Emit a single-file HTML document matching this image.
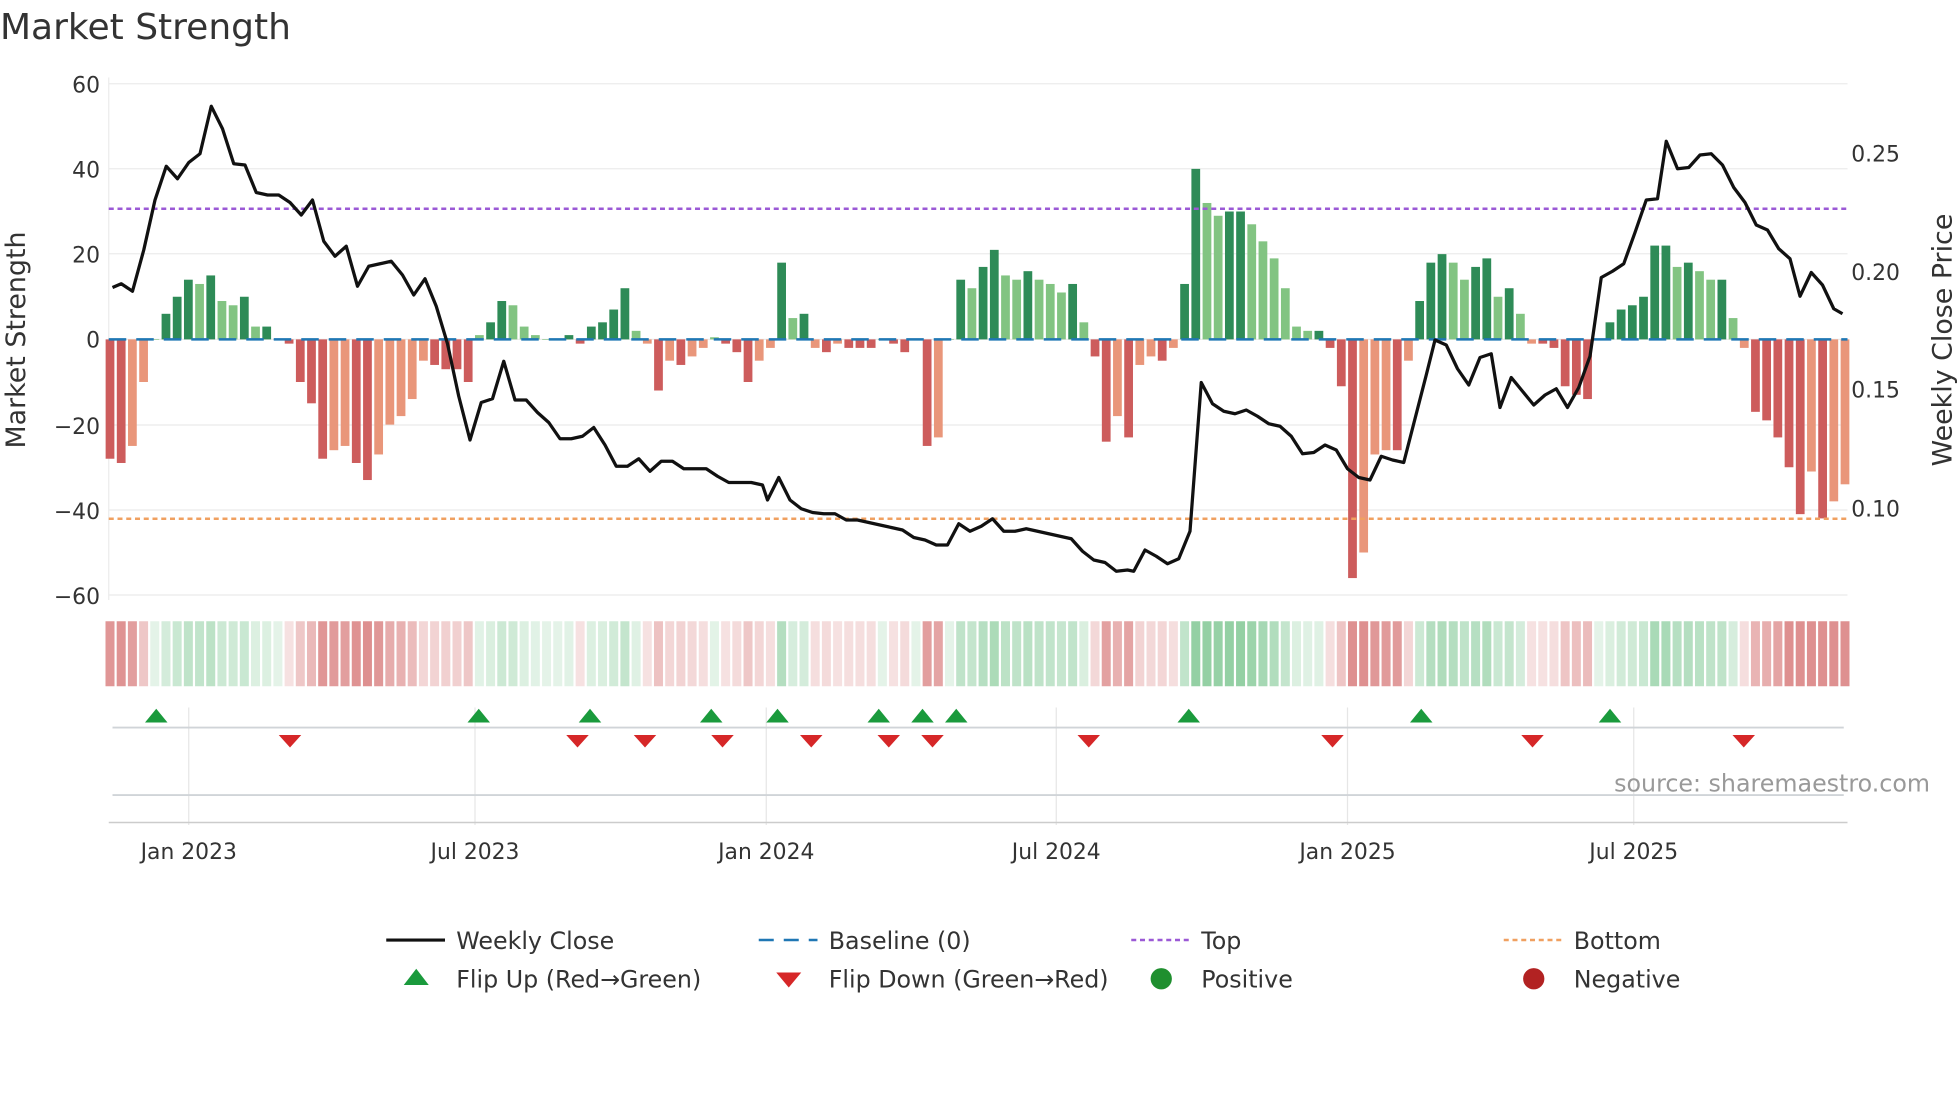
<!DOCTYPE html>
<html><head><meta charset="utf-8"><style>
html,body{margin:0;padding:0;background:#fff;}
svg{display:block;font-family:"DejaVu Sans","Liberation Sans",sans-serif;}
</style></head><body>
<svg id="s" width="1960" height="1102" viewBox="0 0 1568 881.6" xmlns="http://www.w3.org/2000/svg">
<text x="0" y="31" font-size="28.8" fill="#333">Market Strength</text>
<g id="grid" stroke="#ebebeb" stroke-width="1">
<line x1="87" x2="1478" y1="67" y2="67"/><line x1="87" x2="1478" y1="135" y2="135"/>
<line x1="87" x2="1478" y1="203" y2="203"/><line x1="87" x2="1478" y1="271.5" y2="271.5"/>
<line x1="87" x2="1478" y1="340" y2="340"/><line x1="87" x2="1478" y1="408" y2="408"/>
<line x1="87" x2="1478" y1="476" y2="476"/>
<line x1="87" x2="87" y1="62" y2="480"/>
</g>
<g font-size="17.5" fill="#333" text-anchor="end">
<text x="80" y="74">60</text><text x="80" y="142">40</text><text x="80" y="210">20</text>
<text x="80" y="278">0</text><text x="80" y="347">−20</text><text x="80" y="415">−40</text><text x="80" y="483">−60</text>
</g>
<g font-size="17.5" fill="#333">
<text x="1481" y="129">0.25</text><text x="1481" y="224">0.20</text><text x="1481" y="318">0.15</text><text x="1481" y="413">0.10</text>
</g>
<text transform="translate(20,272) rotate(-90)" font-size="21.5" fill="#333" text-anchor="middle">Market Strength</text>
<text transform="translate(1561,272) rotate(-90)" font-size="21.5" fill="#333" text-anchor="middle">Weekly Close Price</text>
<g id="bars"></g>
<line x1="87" x2="1478" y1="271.5" y2="271.5" stroke="#1f77b4" stroke-width="2" stroke-dasharray="14,8"/>
<line x1="87" x2="1478" y1="167" y2="167" stroke="#9b59d6" stroke-width="2" stroke-dasharray="4,3"/>
<line x1="87" x2="1478" y1="415" y2="415" stroke="#f0a060" stroke-width="2" stroke-dasharray="4,3"/>
<polyline id="price" fill="none" stroke="#111" stroke-width="2.6" stroke-linejoin="round"/>
<g id="heat"></g>
<g stroke="#e6e6e6" stroke-width="1">
<line x1="151" x2="151" y1="566" y2="660"/><line x1="380" x2="380" y1="566" y2="660"/><line x1="613" x2="613" y1="566" y2="660"/>
<line x1="845" x2="845" y1="566" y2="660"/><line x1="1078" x2="1078" y1="566" y2="660"/><line x1="1307" x2="1307" y1="566" y2="660"/>
</g>
<line x1="90" x2="1475" y1="582" y2="582" stroke="#d0d4d8" stroke-width="1.5"/>
<line x1="90" x2="1475" y1="636" y2="636" stroke="#d0d4d8" stroke-width="1.5"/>
<line x1="87" x2="1478" y1="658" y2="658" stroke="#ccc" stroke-width="1.2"/>
<g id="mk"></g>
<text x="1544" y="633" font-size="19" fill="#999" text-anchor="end">source: sharemaestro.com</text>
<g font-size="17.5" fill="#333" text-anchor="middle">
<text x="151" y="687">Jan 2023</text><text x="380" y="687">Jul 2023</text><text x="613" y="687">Jan 2024</text>
<text x="845" y="687">Jul 2024</text><text x="1078" y="687">Jan 2025</text><text x="1307" y="687">Jul 2025</text>
</g>
<g font-size="19" fill="#333">
<line x1="309" x2="356" y1="752" y2="752" stroke="#111" stroke-width="2.5"/><text x="365" y="759">Weekly Close</text>
<line x1="607" x2="654" y1="752" y2="752" stroke="#1f77b4" stroke-width="2" stroke-dasharray="12,8"/><text x="663" y="759">Baseline (0)</text>
<line x1="905" x2="952" y1="752" y2="752" stroke="#9b59d6" stroke-width="2" stroke-dasharray="4,3"/><text x="961" y="759">Top</text>
<line x1="1203" x2="1250" y1="752" y2="752" stroke="#f0a060" stroke-width="2" stroke-dasharray="4,3"/><text x="1259" y="759">Bottom</text>
<polygon points="323,788 333,775 343,788" fill="#1a9a3c"/><text x="365" y="790">Flip Up (Red→Green)</text>
<polygon points="621,778 641,778 631,790" fill="#d62728"/><text x="663" y="790">Flip Down (Green→Red)</text>
<circle cx="929" cy="783" r="8.5" fill="#1f8f2f"/><text x="961" y="790">Positive</text>
<circle cx="1227" cy="783" r="8.5" fill="#b22222"/><text x="1259" y="790">Negative</text>
</g>
</svg>
<script>
var v=[-28,-29,-25,-10,0,6,10,14,13,15,9,8,10,3,3,0,-1,-10,-15,-28,-26,-25,-29,-33,-27,-20,-18,-14,-5,-6,-7,-7,-10,1,4,9,8,3,1,0,0,1,-1,3,4,7,12,2,-1,-12,-5,-6,-4,-2,0.5,-1,-3,-10,-5,-2,18,5,6,-2,-3,-1,-2,-2,-2,0,-1,-3,0,-25,-23,0,14,12,17,21,15,14,16,14,13,11,13,4,-4,-24,-18,-23,-6,-4,-5,-2,13,40,32,29,30,30,27,23,19,12,3,2,2,-2,-11,-56,-50,-27,-26,-26,-5,9,18,20,18,14,17,19,10,12,6,-1,-1,-2,-11,-13,-14,0,4,7,8,10,22,22,17,18,16,14,14,5,-2,-17,-19,-23,-30,-41,-31,-42,-38,-34];
var NS="http://www.w3.org/2000/svg";
function el(g,t,a){var e=document.createElementNS(NS,t);for(var k in a)e.setAttribute(k,a[k]);g.appendChild(e);}
var B=document.getElementById('bars'),H=document.getElementById('heat');
var sp=(1476-88)/(v.length-1);
for(var i=0;i<v.length;i++){var x=88+i*sp,val=v[i],p=i?v[i-1]:0;
var dark=Math.abs(val)>=Math.abs(p);
var c=val>=0?(dark?'#2e8b57':'#82c482'):(dark?'#cd5c5c':'#e9967a');
var y0=271.5,h=Math.abs(val)*3.41;
el(B,'rect',{x:x-3.5,y:val>=0?y0-h:y0,width:7,height:Math.max(h,0.5),fill:c});
var a=Math.min(1,0.25+Math.abs(val)/40);
var hc=val>=0?'rgba(60,170,90,'+(a*0.55)+')':'rgba(200,70,70,'+(a*0.6)+')';
el(H,'rect',{x:x-3.6,y:497,width:7.2,height:52,fill:hc});}
var P="90,230 97,227 106,233 115,200 124,160 133,133 142,143 151,130 160,123 169,85 178,103 187,131 196,132 205,154 214,156 223,156 232,162 241,172 250,160 259,193 268,205 277,197 286,229 295,213 304,211 313,209 322,220 331,236 340,223 349,245 358,275 367,317 376,352 385,322 394,319 403,289 412,320 421,320 430,330 439,338 448,351 457,351 466,349 475,342 484,356 493,373 502,373 511,367 520,377 529,369 538,369 547,375 556,375 565,375 574,381 583,386 592,386 601,386 610,388 614,400 623,382 632,400 641,407 650,410 659,411 668,411 677,416 686,416 695,418 704,420 713,422 722,424 731,430 740,432 749,436 758,436 767,419 776,425 785,421 794,415 803,425 812,425 821,423 830,425 839,427 848,429 857,431 866,441 875,448 884,450 893,457 902,456 907,457 916,440 925,445 934,451 943,447 952,425 961,306 970,323 979,329 988,331 997,328 1006,333 1015,339 1024,341 1033,349 1042,363 1051,362 1060,356 1069,360 1078,375 1087,382 1096,384 1105,365 1114,368 1123,370 1132,335 1141,300 1148,272 1157,276 1166,295 1175,308 1184,286 1193,283 1200,326 1209,302 1218,313 1227,324 1236,316 1245,311 1254,326 1263,310 1272,285 1281,222 1290,217 1299,211 1308,186 1317,160 1326,159 1333,113 1342,135 1351,134 1360,124 1369,123 1378,132 1387,150 1396,162 1405,180 1414,184 1423,199 1432,207 1440,237 1449,218 1458,228 1467,247 1474,251";
document.getElementById('price').setAttribute('points',P);
var M=document.getElementById('mk');
[125,383,472,569,622,703,738,765,951,1137,1288].forEach(function(x){el(M,'polygon',{points:(x-9)+',578 '+x+',567 '+(x+9)+',578',fill:'#1a9a3c'});});
[232,462,516,578,649,711,746,871,1066,1226,1395].forEach(function(x){el(M,'polygon',{points:(x-9)+',588 '+(x+9)+',588 '+x+',598',fill:'#d62728'});});
</script>
</body></html>
